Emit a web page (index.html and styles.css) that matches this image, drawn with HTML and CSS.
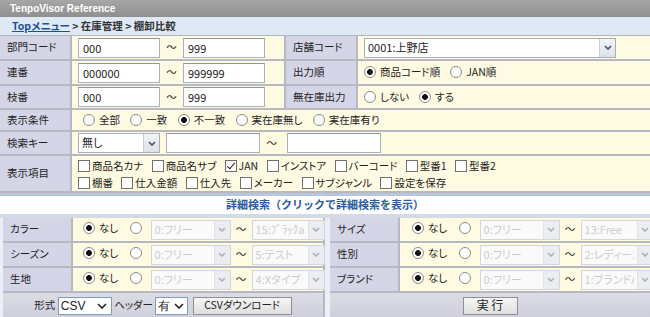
FILE: index.html
```html
<!DOCTYPE html>
<html lang="ja">
<head>
    <meta charset="UTF-8">
    <title>棚卸比較</title>
    <link rel="stylesheet" href="styles.css">
</head>
<body>
    <div class="topbar">TenpoVisor Reference</div>
    <div class="crumb"><a href="#">Topメニュー</a> &gt; 在庫管理 &gt; 棚卸比較</div>

    <table class="form">
        <colgroup><col class="c-label"><col class="c-val"><col class="c-label"><col></colgroup>
        <tr class="r1">
            <th>部門コード</th>
            <td><input class="txt" value="000"><span class="tilde">～</span><input class="txt" value="999"></td>
            <th>店舗コード</th>
            <td><span class="sel store"><select><option>0001:上野店</option></select><span class="arr"><svg viewBox="0 0 8 5"><path d="M1 1l3 3 3-3"/></svg></span></span></td>
        </tr>
        <tr class="r2">
            <th>連番</th>
            <td><input class="txt" value="000000"><span class="tilde">～</span><input class="txt" value="999999"></td>
            <th>出力順</th>
            <td class="opts"><label><input type="radio" name="jun" checked>商品コード順</label><label><input type="radio" name="jun">JAN順</label></td>
        </tr>
        <tr class="r3">
            <th>枝番</th>
            <td><input class="txt" value="000"><span class="tilde">～</span><input class="txt" value="999"></td>
            <th>無在庫出力</th>
            <td class="opts"><label><input type="radio" name="muzaiko">しない</label><label><input type="radio" name="muzaiko" checked>する</label></td>
        </tr>
        <tr class="r4">
            <th>表示条件</th>
            <td colspan="3" class="opts">
                <label><input type="radio" name="joken">全部</label>
                <label><input type="radio" name="joken">一致</label>
                <label><input type="radio" name="joken" checked>不一致</label>
                <label><input type="radio" name="joken">実在庫無し</label>
                <label><input type="radio" name="joken">実在庫有り</label>
            </td>
        </tr>
        <tr class="r5">
            <th>検索キー</th>
            <td colspan="3">
                <span class="sel key"><select><option>無し</option></select><span class="arr"><svg viewBox="0 0 8 5"><path d="M1 1l3 3 3-3"/></svg></span></span>
                <input class="txt key-txt"><span class="tilde">～</span><input class="txt key-txt">
            </td>
        </tr>
        <tr class="r6">
            <th>表示項目</th>
            <td colspan="3" class="checks">
                <div>
                    <label><input type="checkbox">商品名カナ</label>
                    <label><input type="checkbox">商品名サブ</label>
                    <label><input type="checkbox" checked>JAN</label>
                    <label><input type="checkbox">インストア</label>
                    <label><input type="checkbox">バーコード</label>
                    <label><input type="checkbox">型番1</label>
                    <label><input type="checkbox">型番2</label>
                </div>
                <div>
                    <label><input type="checkbox">棚番</label>
                    <label><input type="checkbox">仕入金額</label>
                    <label><input type="checkbox">仕入先</label>
                    <label><input type="checkbox">メーカー</label>
                    <label><input type="checkbox">サブジャンル</label>
                    <label><input type="checkbox">設定を保存</label>
                </div>
            </td>
        </tr>
    </table>

    <div class="toggle">詳細検索（クリックで詳細検索を表示）</div>

    <div class="detail">
        <table class="half left">
            <colgroup><col class="d-label"><col></colgroup>
            <tr>
                <th>カラー</th>
                <td><label><input type="radio" name="color" checked>なし</label><input type="radio" name="color">
                    <span class="sel off d1"><select disabled><option>0:フリー</option></select><span class="arr"><svg viewBox="0 0 8 5"><path d="M1 1l3 3 3-3"/></svg></span></span><span class="tilde">～</span><span class="sel off d2"><select disabled><option>15:ﾌﾞﾗｯｸaaa</option></select><span class="arr"><svg viewBox="0 0 8 5"><path d="M1 1l3 3 3-3"/></svg></span></span></td>
            </tr>
            <tr>
                <th>シーズン</th>
                <td><label><input type="radio" name="season" checked>なし</label><input type="radio" name="season">
                    <span class="sel off d1"><select disabled><option>0:フリー</option></select><span class="arr"><svg viewBox="0 0 8 5"><path d="M1 1l3 3 3-3"/></svg></span></span><span class="tilde">～</span><span class="sel off d2"><select disabled><option>5:テスト</option></select><span class="arr"><svg viewBox="0 0 8 5"><path d="M1 1l3 3 3-3"/></svg></span></span></td>
            </tr>
            <tr>
                <th>生地</th>
                <td><label><input type="radio" name="kiji" checked>なし</label><input type="radio" name="kiji">
                    <span class="sel off d1"><select disabled><option>0:フリー</option></select><span class="arr"><svg viewBox="0 0 8 5"><path d="M1 1l3 3 3-3"/></svg></span></span><span class="tilde">～</span><span class="sel off d2"><select disabled><option>4:Xタイプ</option></select><span class="arr"><svg viewBox="0 0 8 5"><path d="M1 1l3 3 3-3"/></svg></span></span></td>
            </tr>
            <tr class="foot">
                <td colspan="2">
                    形式 <span class="plain csv"><select><option>CSV</option></select><svg viewBox="0 0 10 6"><path d="M1 1l4 4 4-4"/></svg></span>
                    ヘッダー <span class="plain yes"><select><option>有</option></select><svg viewBox="0 0 10 6"><path d="M1 1l4 4 4-4"/></svg></span>
                    <button class="btn dl">CSVダウンロード</button>
                </td>
            </tr>
        </table>

        <table class="half right">
            <colgroup><col class="d-label"><col></colgroup>
            <tr>
                <th>サイズ</th>
                <td><label><input type="radio" name="size" checked>なし</label><input type="radio" name="size">
                    <span class="sel off d1"><select disabled><option>0:フリー</option></select><span class="arr"><svg viewBox="0 0 8 5"><path d="M1 1l3 3 3-3"/></svg></span></span><span class="tilde">～</span><span class="sel off d2"><select disabled><option>13:Free</option></select><span class="arr"><svg viewBox="0 0 8 5"><path d="M1 1l3 3 3-3"/></svg></span></span></td>
            </tr>
            <tr>
                <th>性別</th>
                <td><label><input type="radio" name="sex" checked>なし</label><input type="radio" name="sex">
                    <span class="sel off d1"><select disabled><option>0:フリー</option></select><span class="arr"><svg viewBox="0 0 8 5"><path d="M1 1l3 3 3-3"/></svg></span></span><span class="tilde">～</span><span class="sel off d2"><select disabled><option>2:レディース</option></select><span class="arr"><svg viewBox="0 0 8 5"><path d="M1 1l3 3 3-3"/></svg></span></span></td>
            </tr>
            <tr>
                <th>ブランド</th>
                <td><label><input type="radio" name="brand" checked>なし</label><input type="radio" name="brand">
                    <span class="sel off d1"><select disabled><option>0:フリー</option></select><span class="arr"><svg viewBox="0 0 8 5"><path d="M1 1l3 3 3-3"/></svg></span></span><span class="tilde">～</span><span class="sel off d2"><select disabled><option>1:ブランドA</option></select><span class="arr"><svg viewBox="0 0 8 5"><path d="M1 1l3 3 3-3"/></svg></span></span></td>
            </tr>
            <tr class="foot">
                <td colspan="2"><button class="btn run">実 行</button></td>
            </tr>
        </table>
    </div>
</body>
</html>
```
FILE: styles.css
```css
* {
    box-sizing: border-box;
}

body {
    margin: 0;
    font-family: "Noto Sans CJK JP", sans-serif;
    font-size: 10.5px;
    line-height: 1.2;
    color: #222;
    background-color: #eceff3;
    font-feature-settings: "palt";
}

.topbar {
    height: 17px;
    padding-left: 10px;
    background: linear-gradient(#a6a6a6, #8f8f8f);
    color: #fff;
    font-family: "Liberation Sans", sans-serif;
    font-weight: bold;
    font-size: 10px;
    line-height: 17px;
}

.crumb {
    height: 19px;
    padding-left: 12px;
    background-color: #dee9f5;
    border-bottom: 1px solid #b0b6be;
    font-weight: bold;
    font-size: 10.5px;
    line-height: 18px;
    color: #333;
}

    .crumb a {
        color: #1d4f97;
        text-decoration: underline;
    }

/* form tables */
table {
    border-collapse: separate;
    border-spacing: 0;
    table-layout: fixed;
}

th, td {
    padding: 0 0 0 7px;
    border-right: 2px solid #b8b8c2;
    border-bottom: 2px solid #b8b8c2;
    vertical-align: middle;
    white-space: nowrap;
}

th {
    background-color: #d5d5e8;
    font-weight: normal;
    text-align: left;
}

td {
    background-color: #fffbe2;
}

.form {
    width: 650px;
}

    .form .c-label {
        width: 72px;
    }

    .form .c-val {
        width: 214px;
    }

    .form tr > :last-child {
        border-right: none;
    }

    .form td {
        padding-left: 6px;
    }

.r1 > * { height: 25px; }
.r2 > * { height: 25px; }
.r3 > * { height: 24px; }
.r4 > * { height: 22px; }
.r5 > * { height: 24px; }
.r6 > * { height: 37px; }

.txt {
    width: 82px;
    height: 20px;
    padding: 0 4px;
    border: 1px solid #a9b1bb;
    border-top-color: #8e969f;
    background-color: #fff;
    font: inherit;
    font-size: 11px;
    color: #222;
    vertical-align: middle;
}

.key-txt {
    width: 94px;
    margin-left: 4px;
}

.tilde {
    display: inline-block;
    width: 23px;
    text-align: center;
    vertical-align: middle;
}

/* selects */
.sel {
    display: inline-flex;
    height: 20px;
    border: 1px solid #a7afb9;
    background-color: #fff;
    vertical-align: middle;
}

    .sel select {
        flex: 1;
        min-width: 0;
        appearance: none;
        border: none;
        background: transparent;
        font: inherit;
        font-size: 11px;
        color: #222;
        padding: 0 3px;
    }

    .sel .arr {
        width: 16px;
        display: flex;
        align-items: center;
        justify-content: center;
        background: linear-gradient(#f3f5f8, #dde2e8);
        border-left: 1px solid #c9ced6;
    }

    .sel svg {
        width: 8px;
        height: 5px;
        fill: none;
        stroke: #3f4f70;
        stroke-width: 1.6;
    }

.store { width: 252px; }
.key { width: 82px; }
.d1 { width: 80px; }
.d2 { width: 73px; }

.sel.off {
    border-color: #d3d6da;
    background-color: #fafafa;
}

    .sel.off select {
        color: #b9b9b9;
    }

    .sel.off .arr {
        background: #ebedf0;
        border-left-color: #e0e2e6;
    }

    .sel.off svg {
        stroke: #a9b0bd;
    }

/* radios and checkboxes */
input[type="radio"],
input[type="checkbox"] {
    appearance: none;
    width: 12px;
    height: 12px;
    margin: 0 4px 0 0;
    border: 1px solid #8b8b8b;
    background-color: #fff;
    vertical-align: -2px;
    position: relative;
}

input[type="radio"] {
    border-radius: 50%;
}

    input[type="radio"]:checked {
        background: radial-gradient(circle, #111 0 2.6px, #fff 3.2px);
    }

input[type="checkbox"] {
    border-color: #6f6f6f;
    margin-right: 2px;
}

    input[type="checkbox"]:checked::after {
        content: "";
        position: absolute;
        left: 3px;
        top: 0px;
        width: 3px;
        height: 7px;
        border: solid #222;
        border-width: 0 1.5px 1.5px 0;
        transform: rotate(40deg);
    }

.opts {
    padding-left: 9px;
}

    .opts label {
        margin-right: 10px;
    }

.r4 .opts {
    padding-left: 11px;
}

    .r4 .opts label {
        margin-right: 8px;
    }

.checks {
    padding-left: 8px;
}

    .checks div {
        height: 17px;
        line-height: 17px;
    }

    .checks label {
        margin-right: 6px;
    }

/* detail search */
.toggle {
    height: 25px;
    border-top: 3px solid #b6c7d9;
    border-bottom: 4px solid #d3dbe4;
    background-color: #fff;
    text-align: center;
    font-weight: bold;
    font-size: 11px;
    line-height: 17px;
    color: #2a5b9b;
    font-feature-settings: normal;
}

.detail {
    display: flex;
    gap: 5px;
    padding-left: 3px;
}

.half .d-label {
    width: 70px;
}

.half.left {
    width: 322px;
}

.half.right {
    width: 320px;
}

    .half.right tr > :last-child {
        border-right: none;
    }

    .half.right td {
        padding-left: 12px;
    }

.half tr > * {
    height: 25px;
}

.half td {
    padding-left: 10px;
}

    .half td label {
        margin-right: 12px;
    }

.half .tilde {
    width: 21px;
}

.half .sel.d1 {
    margin-left: 2px;
}

.half tr.foot > td {
    height: 25px;
    padding: 0;
    text-align: center;
    background: linear-gradient(#dcdce6, #cfcfdc);
    border-bottom: none;
}

.plain {
    display: inline-flex;
    align-items: center;
    height: 18px;
    border: 1px solid #7f9db9;
    background-color: #fff;
    vertical-align: middle;
}

    .plain select {
        appearance: none;
        border: none;
        background: transparent;
        font-family: "Liberation Sans", sans-serif;
        font-size: 12px;
        padding: 0 2px;
        color: #222;
    }

    .plain svg {
        width: 10px;
        height: 6px;
        margin-right: 3px;
        fill: none;
        stroke: #222;
        stroke-width: 1.6;
    }

.csv { width: 54px; }
.csv select { width: 38px; }
.yes { width: 33px; }
.yes select { width: 18px; }

.btn {
    height: 18px;
    padding: 0;
    border: 1px solid #8f8f8f;
    background: linear-gradient(#f6f6f6, #dedede);
    font: inherit;
    color: #222;
    vertical-align: middle;
}

.dl {
    width: 99px;
    margin-left: 2px;
}

.run {
    width: 55px;
    font-size: 12px;
}
```
